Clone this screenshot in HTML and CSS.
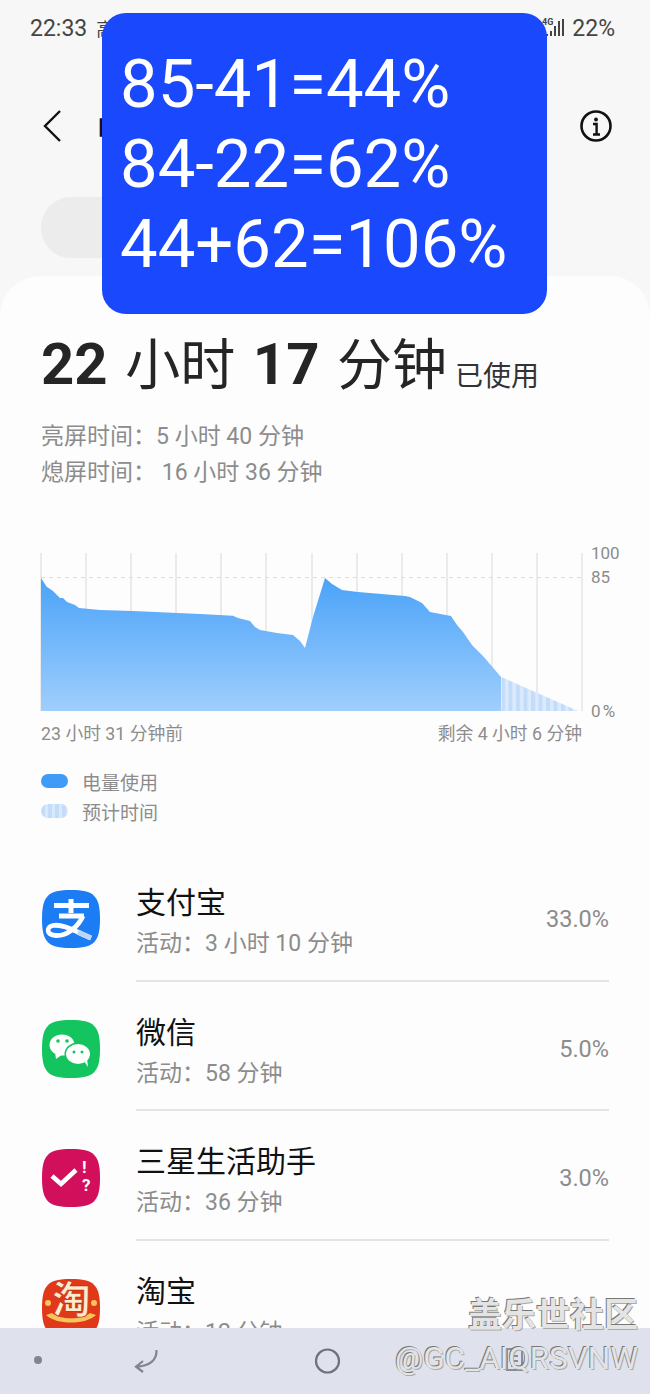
FILE: index.html
```html
<!DOCTYPE html>
<html lang="zh">
<head>
<meta charset="utf-8">
<title>电池使用情况</title>
<link rel="stylesheet" href="styles.css">
</head>
<body>
<div class="screen">
  <div class="status">
    <span class="time">22:33</span>
    <span class="status-app">高</span>
    <span class="status-right">
      <svg class="signal" width="24" height="22" viewBox="0 0 24 22"><text x="0" y="8" class="net">4G</text><rect x="4" y="17" width="2" height="2" fill="#444"/><rect x="8" y="14" width="2" height="5" fill="#444"/><rect x="12" y="9" width="2" height="10" fill="#444"/><rect x="16" y="4" width="2" height="15" fill="#444"/><rect x="20" y="2" width="2" height="17" fill="#444"/></svg>
      <span>22%</span>
    </span>
  </div>
  <header class="topbar">
    <svg class="back" width="20" height="34" viewBox="0 0 20 34"><path d="M17 2 2 17l15 15" fill="none" stroke="#111" stroke-width="2.4"/></svg>
    <span class="title">电池使用情况</span>
    <svg class="info" width="34" height="34" viewBox="0 0 34 34"><circle cx="17" cy="17" r="14.5" fill="none" stroke="#111" stroke-width="2.6"/><circle cx="17" cy="10.5" r="1.9" fill="#111"/><path d="M14 15h3.600v10M14 25.500h7" fill="none" stroke="#111" stroke-width="2.4"/></svg>
  </header>
  <div class="pill"></div>
  <main class="card">
    <h1 class="total"><span class="num">22</span> 小时 <span class="num">17</span> 分钟<small>已使用</small></h1>
    <p class="stat stat-first">亮屏时间：5 小时 40 分钟</p>
    <p class="stat">熄屏时间： 16 小时 36 分钟</p>
    <svg class="chart" width="650" height="176" viewBox="0 545 650 176">
      <defs>
        <linearGradient id="fill" x1="0" y1="0" x2="0" y2="1"><stop offset="0" stop-color="#4aa3f8"/><stop offset="1" stop-color="#a0cefd"/></linearGradient>
        <pattern id="stripes" width="7.500" height="10" patternUnits="userSpaceOnUse" x="501"><rect width="7.500" height="10" fill="#dbeafc"/><rect width="4" height="10" fill="#c2dcfa"/></pattern>
      </defs>
      <g stroke="#e6e6e6" stroke-width="1.6">
        <path d="M41 553V711M86 553V711M131 553V711M176 553V711M221 553V711M266 553V711M312 553V711M357 553V711M402 553V711M447 553V711M492 553V711M537 553V711M582 553V711"/>
      </g>
      <path d="M41 577.500H582" stroke="#ddd" stroke-width="1.200" stroke-dasharray="4 4"/>
      <path fill="url(#fill)" d="M41 578 46.700 586.700 53 591 60 598 63 598 67 602 75 605 79 608 100 610 133 611 200 614 233 615.700 238 618 250 621 255 627 260 630 277 633 293 635 300 641 305 648 313 617 325 578 332 584 342 590 358 592 405 596 410 597 422 603 430 612 451 616 457 625 463 632 472 645 483 656 501 677V711H41Z"/>
      <path fill="url(#stripes)" d="M501.500 677 577 710.500V711H501.500Z"/>
      <text x="591" y="559" class="axis">100</text>
      <text x="591" y="583" class="axis">85</text>
      <text x="591" y="717" class="axis axis-zero">0 %</text>
    </svg>
    <div class="chart-labels"><span>23 小时 31 分钟前</span><span>剩余 4 小时 6 分钟</span></div>
    <div class="legend">
      <div class="legend-row"><i class="swatch swatch-use"></i><span>电量使用</span></div>
      <div class="legend-row"><i class="swatch swatch-est"></i><span>预计时间</span></div>
    </div>
    <ul class="apps">
      <li class="app">
        <svg class="app-icon" width="58" height="58" viewBox="0 0 58 58"><path fill="#1b7cf3" d="M29 0C52 0 58 6 58 29S52 58 29 58 0 52 0 29 6 0 29 0Z"/><path d="M12 15.500H47M29 9V23M17 26H42" stroke="#fff" stroke-width="5" fill="none"/><path d="M41 26C36 37 25 46 14 45.500 4 45 4 37 11 35.500 22 33.500 36 43 49 48" stroke="#fff" stroke-width="4.800" fill="none"/><path d="M36 42 49 48" stroke="#bcd6f8" stroke-width="5"/></svg>
        <div class="app-text"><div class="app-name">支付宝</div><div class="app-sub">活动：3 小时 10 分钟</div></div>
        <span class="app-pct">33.0%</span>
      </li>
      <li class="app">
        <svg class="app-icon" width="58" height="58" viewBox="0 0 58 58"><path fill="#14c45f" d="M29 0C52 0 58 6 58 29S52 58 29 58 0 52 0 29 6 0 29 0Z"/><ellipse cx="20" cy="25" rx="12.500" ry="10.500" fill="#fff"/><path d="M13 32 14 39 21 34Z" fill="#fff"/><ellipse cx="36" cy="34" rx="13.500" ry="11.500" fill="#14c45f"/><ellipse cx="36" cy="34" rx="12" ry="10" fill="#fff"/><path d="M42 41 46 47 45 38Z" fill="#fff"/><circle cx="16" cy="21" r="1.800" fill="#14c45f"/><circle cx="25" cy="21" r="1.800" fill="#14c45f"/><circle cx="32" cy="32" r="1.500" fill="#14c45f"/><circle cx="40" cy="32" r="1.500" fill="#14c45f"/></svg>
        <div class="app-text"><div class="app-name">微信</div><div class="app-sub">活动：58 分钟</div></div>
        <span class="app-pct">5.0%</span>
      </li>
      <li class="app">
        <svg class="app-icon" width="58" height="58" viewBox="0 0 58 58"><path fill="#d20f5b" d="M29 0C52 0 58 6 58 29S52 58 29 58 0 52 0 29 6 0 29 0Z"/><path d="M10 27 19 35 34 21" stroke="#fff" stroke-width="4.600" fill="none"/><text x="40" y="24" class="mark">!</text><text x="40" y="42" class="mark">?</text></svg>
        <div class="app-text"><div class="app-name">三星生活助手</div><div class="app-sub">活动：36 分钟</div></div>
        <span class="app-pct">3.0%</span>
      </li>
      <li class="app">
        <svg class="app-icon" width="58" height="58" viewBox="0 0 58 58"><path fill="#e2381a" d="M29 0C52 0 58 6 58 29S52 58 29 58 0 52 0 29 6 0 29 0Z"/><circle cx="6" cy="24" r="3" fill="#f6c45a"/><circle cx="52" cy="24" r="3" fill="#f6c45a"/><path d="M4 36C14 46 44 46 54 36L48 34C40 41 18 41 10 34Z" fill="#f6c45a"/><text x="29.500" y="34" class="tao">淘</text></svg>
        <div class="app-text"><div class="app-name">淘宝</div><div class="app-sub">活动：12 分钟</div></div>
      </li>
    </ul>
  </main>
  <nav class="nav">
    <svg class="nav-icons" width="650" height="66" viewBox="0 0 650 66">
      <circle cx="38" cy="32" r="4" fill="#82858f"/>
      <path d="M156.500 22C157 32 150 38 136 38.700M143 33 136 38.700 143 44" fill="none" stroke="#82858f" stroke-width="2.200"/>
      <circle cx="327.500" cy="33" r="11.500" fill="none" stroke="#6f727b" stroke-width="2.200"/>
      <path d="M507 21H522V42H507ZM511 28H518M511 33H518M511 38H518" fill="none" stroke="#8a8d96" stroke-width="2"/>
    </svg>
  </nav>
  <div class="mark-cn">盖乐世社区</div>
  <div class="mark-id">@GC_AIQRSVNW</div>
  <aside class="overlay">
    <p>85-41=44%</p>
    <p>84-22=62%</p>
    <p>44+62=106%</p>
  </aside>
</div>
</body>
</html>
```
FILE: styles.css
```css
* { box-sizing: border-box; }
html, body { margin: 0; padding: 0; }
body { font-family: Roboto, "Noto Sans CJK SC", sans-serif; background: #f7f7f7; }
.screen { position: relative; width: 650px; height: 1394px; overflow: hidden; background: #f7f7f7; }

.status { display: flex; align-items: center; height: 56px; padding: 0 35px 0 30px; color: #444; font: 23px/1 Roboto, sans-serif; }
.status-app { margin-left: 9px; font-family: "Noto Sans CJK SC", sans-serif; font-size: 18px; }
.status-right { margin-left: auto; display: flex; align-items: center; gap: 6px; }
.net { font: 700 9px Roboto, sans-serif; fill: #444; }

.topbar { display: flex; align-items: center; height: 70px; margin-top: 35px; padding: 0 37px 0 43px; }
.title { margin-left: 33px; font-family: "Noto Sans CJK SC", sans-serif; font-weight: 500; font-size: 31px; color: #111; }
.info { margin-left: auto; }

.pill { width: 320px; height: 61px; margin: 36px 0 0 41px; border-radius: 30px; background: #ececec; }

.card { margin-top: 18px; height: 1200px; padding: 49px 41px 0; background: #fdfdfd; border-radius: 40px 40px 0 0; }
.total { margin: 0; height: 89px; font-weight: 400; font-size: 55px; line-height: 78px; word-spacing: 4px; color: #252525; white-space: nowrap; }
.num { font-family: Roboto, sans-serif; font-weight: 700; font-size: 58px; }
.total small { margin-left: 8px; font-size: 28px; font-weight: 400; color: #333; vertical-align: -2px; }
.stat { margin: 0; font-size: 23px; line-height: 36px; color: #8c8c8c; white-space: nowrap; }
.stat-first { margin-top: 5px; }

.chart { display: block; margin: 54px 0 0 -41px; }
.axis { font: 17px Roboto, sans-serif; fill: #8c8c8c; }
.axis-zero { word-spacing: -2px; }
.chart-labels { display: flex; justify-content: space-between; width: 541px; margin-top: -2px; font-size: 17.800px; line-height: 30px; color: #8c8c8c; }

.legend { margin-top: 20px; display: flex; flex-direction: column; gap: 6px; }
.legend-row { display: flex; align-items: center; gap: 14px; height: 24px; font-size: 19px; color: #8c8c8c; }
.swatch { width: 27px; height: 14px; border-radius: 7px; }
.swatch-use { background: #3f9bf5; }
.swatch-est { background: repeating-linear-gradient(90deg, #c2dcfa 0 4px, #d9e9fc 4px 7px); }

.apps { list-style: none; margin: 29px 0 0; padding: 0; width: 568px; }
.app { position: relative; display: flex; align-items: center; height: 129.500px; padding-left: 95px; }
.app-icon { position: absolute; left: 1px; top: 38px; }
.app-text { flex: 1; border-bottom: 2px solid #e4e4e4; height: 129.500px; padding-top: 30px; }
.app:last-child .app-text { border-bottom: 0; }
.app-name { font-size: 30px; line-height: 42px; color: #111; }
.app-sub { font-size: 23px; line-height: 39px; color: #8c8c8c; }
.app-pct { position: absolute; right: 0; top: 52px; font: 23.500px/30px Roboto, sans-serif; color: #8c8c8c; }
.mark { font: 700 17px Roboto, sans-serif; fill: #fff; }
.tao { font-size: 38px; font-weight: 700; font-family: "Noto Sans CJK SC", sans-serif; fill: #fdeccb; stroke: #b81c0c; stroke-width: 0.600px; text-anchor: middle; }

.nav { position: absolute; left: 0; right: 0; bottom: 0; height: 66px; background: #dfe2ec; }
.nav-icons { display: block; }

.mark-cn, .mark-id { position: absolute; right: 12px; white-space: nowrap; color: #e4e4e4; text-shadow: -1px -1px 0 #777, 1px 1px 0 #aaa; }
.mark-cn { top: 1290px; font-family: "Noto Sans CJK SC", sans-serif; font-size: 34px; font-weight: 700; line-height: 46px; }
.mark-id { top: 1339px; font: 31.400px/40px Roboto, sans-serif; }

.overlay { position: absolute; left: 102px; top: 13px; width: 445px; height: 301px; padding: 31px 0 0 18px; border-radius: 24px; background: #1a48fd; color: #fff; font: 400 67px/80px Roboto, sans-serif; }
.overlay p { margin: 0; white-space: nowrap; }
```
